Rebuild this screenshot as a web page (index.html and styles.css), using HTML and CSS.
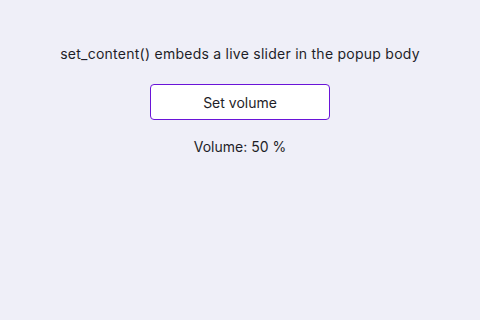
FILE: index.html
```html
<!DOCTYPE html>
<html lang="en">
<head>
    <meta charset="UTF-8">
    <title>Popup content</title>
    <link rel="stylesheet" href="styles.css">
</head>
<body>
    <div class="screen">
        <p class="caption">set_content() embeds a live slider in the popup body</p>
        <button class="open-btn">Set volume</button>
        <p class="volume">Volume: 50 %</p>
    </div>
</body>
</html>
```

FILE: styles.css
```css
body {
    margin: 0;
    background-color: #efeff8;
    font-family: "Inter", "Noto Sans", sans-serif;
    color: #1e1e28;
}

.screen {
    width: 480px;
    height: 320px;
    display: flex;
    flex-direction: column;
    align-items: center;
    padding-top: 45px;
    box-sizing: border-box;
}

.caption {
    margin: 0;
    font-size: 14px;
    line-height: 18px;
    letter-spacing: 0.25px;
}

.open-btn {
    margin-top: 21px;
    width: 180px;
    height: 36px;
    background-color: #ffffff;
    border: 1px solid #6a14d8;
    border-radius: 4px;
    font-family: inherit;
    font-size: 14px;
    color: #1e1e28;
    padding: 0;
}

.volume {
    margin: 18px 0 0;
    font-size: 14px;
    line-height: 18px;
}
```
